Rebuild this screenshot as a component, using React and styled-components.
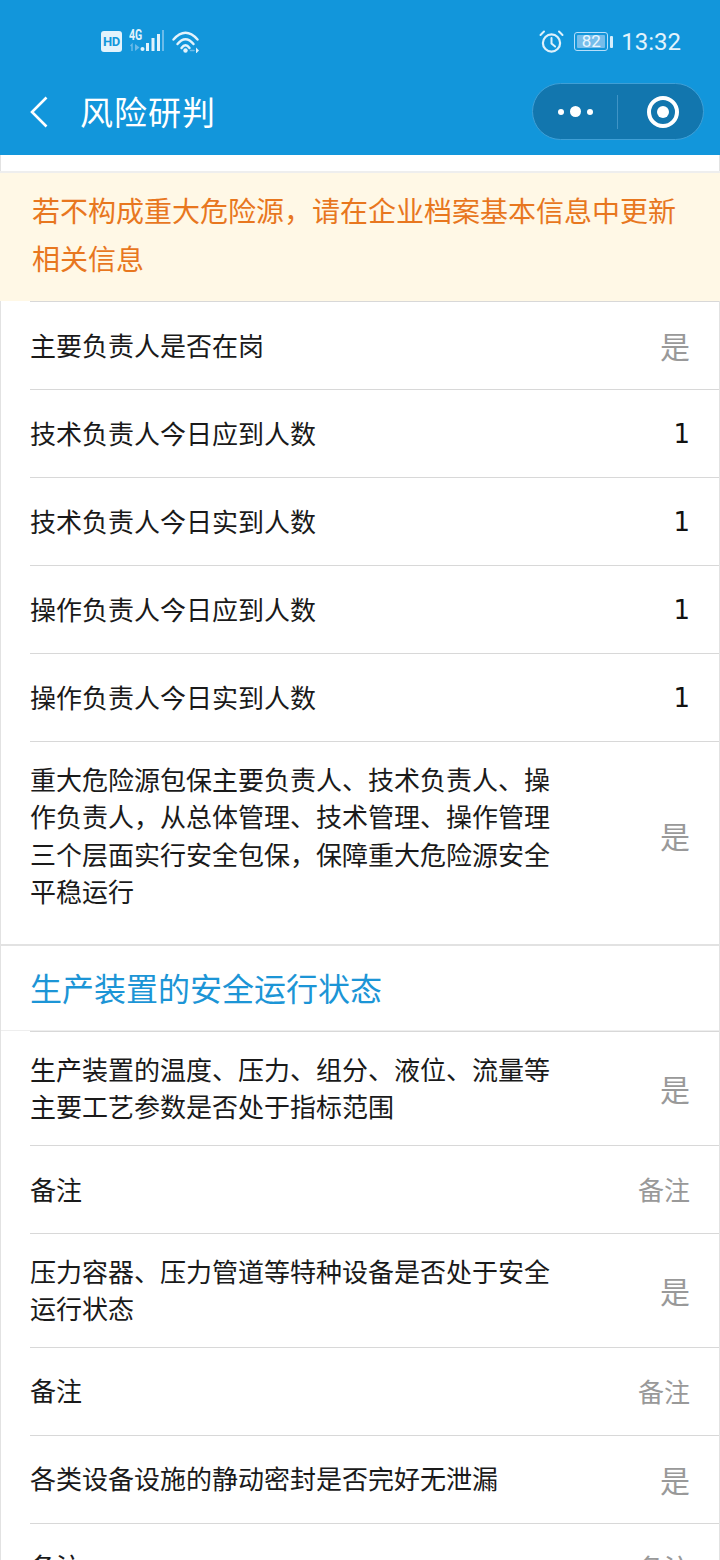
import React from "react";
import styled, { createGlobalStyle } from "styled-components";

const Global = createGlobalStyle`
  html, body { margin: 0; padding: 0; background: #fff; }
  body { font-family: "Noto Sans CJK SC", "Liberation Sans", sans-serif; }
`;
const Page = styled.div`
  width: 720px; height: 1560px; overflow: hidden; background: #fff; display: flex; flex-direction: column;
`;
const Header = styled.header`
  height: 155px; flex: none; background: #1296db; color: #fff; display: flex; flex-direction: column;
`;
const StatusBar = styled.div`
  height: 83px; box-sizing: border-box; padding: 0 39px 0 101px; display: flex; align-items: center; justify-content: space-between;
`;
const StatusGroup = styled.div`
  display: flex; align-items: center; gap: ${p => p.$gap || 8}px;
`;
const HdBadge = styled.span`
  width: 21px; height: 21px; border-radius: 3px; background: #e3f3fc; color: #1296db;
  font: 700 13px/21px "Roboto", sans-serif; text-align: center; letter-spacing: -0.2px;
`;
const SignalWrap = styled.div`
  position: relative; width: 36px; height: 24px;
`;
const FourG = styled.span`
  position: absolute; left: 0; top: -3px; font: 700 14px/16px "Roboto", sans-serif; color: #e3f3fc; transform: scaleX(.75); transform-origin: left top;
`;
const Battery = styled.div`
  width: 37px; height: 20px; display: flex; align-items: center; gap: 2px;
`;
const BatteryBody = styled.div`
  width: 34px; height: 19px; box-sizing: border-box; border: 1px solid #b5defa; border-radius: 3px; padding: 2px; flex: none;
`;
const BatteryFill = styled.div`
  height: 100%; background: #76bdea; color: #e8f6ff; font: 400 17px/13px "Roboto", sans-serif; text-align: center; border-radius: 1px;
`;
const BatteryCap = styled.div`
  width: 3px; height: 12px; background: #d6eefc; border-radius: 1px; flex: none;
`;
const Time = styled.span`
  font: 400 24px/28px "Roboto", sans-serif; color: #e3f3fc;
`;
const NavBar = styled.div`
  flex: 1; display: flex; align-items: flex-start; padding: 0 16px 0 29px;
`;
const Back = styled.div`
  width: 51px; height: 57px; flex: none; display: flex; align-items: center;
`;
const Title = styled.h1`
  flex: 1; margin: 0; font-weight: 400; font-size: 33px; line-height: 57px; letter-spacing: 1px; color: #fff;
`;
const Capsule = styled.div`
  width: 172px; height: 57px; box-sizing: border-box; border: 1px solid #3f9fd6; border-radius: 29px; background: #1276ae;
  display: flex; align-items: center; flex: none;
`;
const CapsuleMenu = styled.div`
  width: 84px; flex: none; display: flex; align-items: center; justify-content: center; gap: 6px;
`;
const CapsuleClose = styled.div`
  flex: 1; padding-left: 4px; display: flex; align-items: center; justify-content: center;
`;
const Dot = styled.span`
  width: ${p => p.$s}px; height: ${p => p.$s}px; border-radius: 50%; background: #fff;
`;
const CapsuleDivider = styled.div`
  width: 1px; height: 34px; background: #3f94c6; flex: none;
`;
const Ring = styled.div`
  width: 32px; height: 32px; box-sizing: border-box; border: 4px solid #fff; border-radius: 50%;
  display: flex; align-items: center; justify-content: center;
`;
const RingDot = styled.div`
  width: 12px; height: 12px; background: #fff; border-radius: 50%;
`;
const Body = styled.main`
  flex: 1; box-sizing: border-box; padding-top: 16px; border-left: 1px solid #e2e2e2; border-right: 1px solid #e2e2e2;
`;
const Notice = styled.div`
  margin-left: -1px; margin-right: -1px; height: 130px; box-sizing: border-box; border-top: 2px solid #eeeeee;
  background: #fff8e6; color: #e8771f; font-size: 28px; line-height: 48px; padding: 13px 32px 0 32px;
`;
const Row = styled.div`
  margin-left: 29px; padding: 18px 29px 20px 0; box-sizing: border-box; min-height: 88px; border-top: 1px solid #d8d8d8;
  display: flex; align-items: center; justify-content: space-between;
  margin-bottom: ${p => p.$gapBelow || 0}px;
`;
const Label = styled.div`
  width: 520px; font-size: 26px; line-height: 37.4px; color: #1a1a1a;
`;
const Value = styled.div`
  font-size: ${p => p.$big ? 30 : 26}px; line-height: 38px; flex: none; color: ${p => p.$dark ? "#111" : "#999"};
  font-family: ${p => p.$dark ? '"DejaVu Sans", sans-serif' : 'inherit'};
  margin-top: ${p => p.$dark ? 3 : 1}px;
`;
const SectionTitle = styled.div`
  height: 87px; box-sizing: border-box; border-top: 2px solid #e2e2e2; border-bottom: 1px solid #eeeeee;
  padding: 18px 0 0 29px; color: #1c95d6; font-size: 32px; line-height: 46px;
`;

const AlarmIcon = () => (
  <svg width="25" height="23" viewBox="0 0 25 23" fill="none" stroke="#dff1fb" strokeWidth="2" strokeLinecap="round">
    <circle cx="12.5" cy="13" r="8.6" strokeWidth="2.2" />
    <path d="M12.5 8v5.5l3.6 3" />
    <path d="M1.5 5 5 1.5M23.5 5 20 1.5" />
  </svg>
);
const Signal = () => (
  <SignalWrap>
    <FourG>4G</FourG>
    <svg width="36" height="24" viewBox="0 0 36 24" style={{ position: "absolute", left: 0, top: 0 }}>
      <path d="M1.5 16l1.5-1.5V21" stroke="#6cbbe9" strokeWidth="1.4" fill="none" />
      <path d="M6 14v7l4.5-3.5z" fill="#6cbbe9" />
      <circle cx="13.5" cy="19" r="2" fill="#e3f3fc" />
      <rect x="17" y="13" width="3" height="8" fill="#e3f3fc" />
      <rect x="22.5" y="8" width="3" height="13" fill="#e3f3fc" />
      <rect x="28" y="4" width="3" height="17" fill="#e3f3fc" />
      <rect x="33" y="0" width="2" height="21" fill="#6cbbe9" />
    </svg>
  </SignalWrap>
);
const Wifi = () => (
  <svg width="28" height="22" viewBox="0 0 28 22" fill="none" stroke="#e3f3fc" strokeWidth="2.4" strokeLinecap="round">
    <path d="M1.5 8.5Q13.5 -5 25.5 8.5" />
    <path d="M5.5 13Q13.5 3.5 21.5 13" />
    <path d="M9.5 17Q13.5 11.5 17.5 17" />
    <circle cx="13.5" cy="19.5" r="2.2" fill="#e3f3fc" stroke="none" />
    <path d="M18.5 19.5h3.5" stroke="#6cbbe9" strokeWidth="1.5" />
    <path d="M24 16.5v6l3-3z" fill="#e3f3fc" stroke="none" />
  </svg>
);

const first = [
  ["主要负责人是否在岗", "是"],
  ["技术负责人今日应到人数", "1"],
  ["技术负责人今日实到人数", "1"],
  ["操作负责人今日应到人数", "1"],
  ["操作负责人今日实到人数", "1"],
];
const second = [
  ["生产装置的温度、压力、组分、液位、流量等主要工艺参数是否处于指标范围", "是"],
  ["备注", "备注"],
  ["压力容器、压力管道等特种设备是否处于安全运行状态", "是"],
  ["备注", "备注"],
  ["各类设备设施的静动密封是否完好无泄漏", "是"],
  ["备注", "备注"],
];

const RowItem = ({ label, value, gapBelow }) => (
  <Row $gapBelow={gapBelow}>
    <Label>{label}</Label>
    <Value $big={value === "是"} $dark={value === "1"}>{value}</Value>
  </Row>
);

export default function App() {
  return (
    <Page>
      <Global />
      <Header>
        <StatusBar>
          <StatusGroup $gap={7}>
            <HdBadge>HD</HdBadge>
            <Signal />
            <Wifi />
          </StatusGroup>
          <StatusGroup $gap={10}>
            <AlarmIcon />
            <Battery>
              <BatteryBody><BatteryFill>82</BatteryFill></BatteryBody>
              <BatteryCap />
            </Battery>
            <Time>13:32</Time>
          </StatusGroup>
        </StatusBar>
        <NavBar>
          <Back>
            <svg width="20" height="32" viewBox="0 0 20 32" fill="none" stroke="#fff" strokeWidth="2.6">
              <path d="M17.5 1.5 3 16l14.5 14.5" />
            </svg>
          </Back>
          <Title>风险研判</Title>
          <Capsule>
            <CapsuleMenu>
              <Dot $s={6} /><Dot $s={11} /><Dot $s={6} />
            </CapsuleMenu>
            <CapsuleDivider />
            <CapsuleClose><Ring><RingDot /></Ring></CapsuleClose>
          </Capsule>
        </NavBar>
      </Header>
      <Body>
        <Notice>若不构成重大危险源，请在企业档案基本信息中更新相关信息</Notice>
        {first.map(([l, v], i) => <RowItem key={i} label={l} value={v} />)}
        <RowItem gapBelow={14.4} label="重大危险源包保主要负责人、技术负责人、操作负责人，从总体管理、技术管理、操作管理三个层面实行安全包保，保障重大危险源安全平稳运行" value="是" />
        <SectionTitle>生产装置的安全运行状态</SectionTitle>
        {second.map(([l, v], i) => <RowItem key={i} label={l} value={v} />)}
      </Body>
    </Page>
  );
}
